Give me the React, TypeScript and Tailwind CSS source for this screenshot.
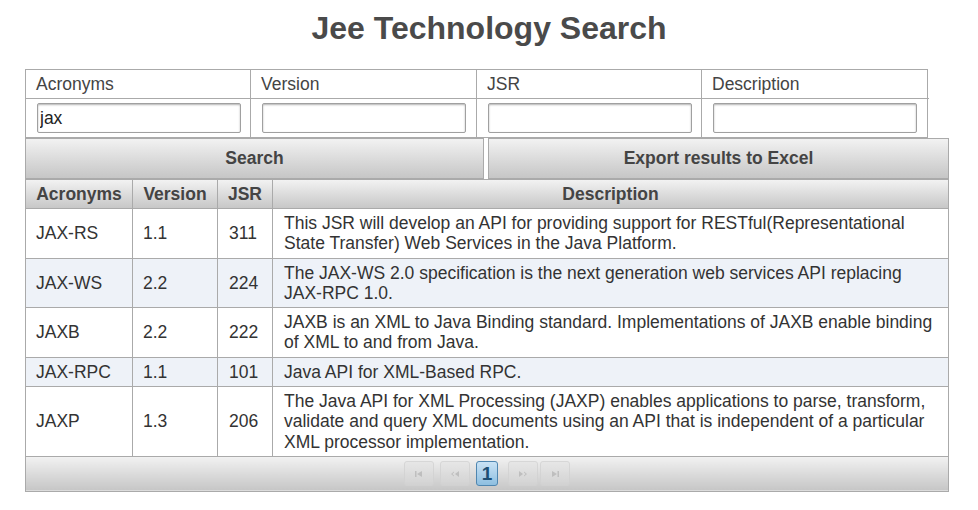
import React from "react";

const rows = [
  {
    acr: "JAX-RS",
    ver: "1.1",
    jsr: "311",
    desc: "This JSR will develop an API for providing support for RESTful(Representational State Transfer) Web Services in the Java Platform.",
  },
  {
    acr: "JAX-WS",
    ver: "2.2",
    jsr: "224",
    desc: "The JAX-WS 2.0 specification is the next generation web services API replacing JAX-RPC 1.0.",
  },
  {
    acr: "JAXB",
    ver: "2.2",
    jsr: "222",
    desc: "JAXB is an XML to Java Binding standard. Implementations of JAXB enable binding of XML to and from Java.",
  },
  { acr: "JAX-RPC", ver: "1.1", jsr: "101", desc: "Java API for XML-Based RPC." },
  {
    acr: "JAXP",
    ver: "1.3",
    jsr: "206",
    desc: "The Java API for XML Processing (JAXP) enables applications to parse, transform, validate and query XML documents using an API that is independent of a particular XML processor implementation.",
  },
];

const grad = "bg-gradient-to-b from-[#f2f2f2] to-[#c6c6c6]";
const font = '"Liberation Sans", Arial, sans-serif';

function PagerIcon({ kind }: { kind: "first" | "prev" | "next" | "last" }) {
  return (
    <svg width="10" height="8" viewBox="0 0 10 8" className="text-[#b8b8b8]">
      {kind === "first" && (
        <g fill="currentColor">
          <rect x="1" y="1" width="1.5" height="6" />
          <path d="M3 4 L8 1 L8 7 Z" />
        </g>
      )}
      {kind === "prev" && (
        <g fill="currentColor">
          <path d="M4 1.5 L1 4 L4 6.5 L4 5.5 L2.4 4 L4 2.5 Z" />
          <path d="M5 4 L9 1 L9 7 Z" />
        </g>
      )}
      {kind === "next" && (
        <g fill="currentColor">
          <path d="M1 1 L5 4 L1 7 Z" />
          <path d="M6 1.5 L9 4 L6 6.5 L6 5.5 L7.6 4 L6 2.5 Z" />
        </g>
      )}
      {kind === "last" && (
        <g fill="currentColor">
          <path d="M2 1 L7 4 L2 7 Z" />
          <rect x="7.5" y="1" width="1.5" height="6" />
        </g>
      )}
    </svg>
  );
}

function PagerBtn({ kind, className = "" }: { kind: "first" | "prev" | "next" | "last"; className?: string }) {
  return (
    <div
      className={`flex h-[25px] w-[30px] items-center justify-center rounded-[3px] border border-[#d2d2d2] bg-gradient-to-b from-[#e6e6e6] to-[#d4d4d4] opacity-80 ${className}`}
    >
      <PagerIcon kind={kind} />
    </div>
  );
}

export default function App() {
  const labels = ["Acronyms", "Version", "JSR", "Description"];
  return (
    <div
      className="min-h-[510px] w-[978px] bg-white text-[17.5px] text-[#333]"
      style={{ fontFamily: font }}
    >
      <h1 className="pt-[8px] pb-[21px] text-center text-[32px] font-bold leading-[40px] text-[#4a4a4a]">
        Jee Technology Search
      </h1>

      <div className="ml-[25px] w-[903px]">
        <div className="grid grid-cols-[225px_226px_225px_227px] border border-[#aaa]">
          {labels.map((l, i) => (
            <div
              key={l}
              className={`h-[29px] border-b border-[#aaa] pl-[10px] leading-[29px] text-[#444] ${i < 3 ? "border-r" : ""}`}
            >
              {l}
            </div>
          ))}
          {labels.map((l, i) => (
            <div
              key={l + "in"}
              className={`flex h-[38px] items-center pl-[11px] ${i < 3 ? "border-r border-[#aaa]" : ""}`}
            >
              <input
                defaultValue={i === 0 ? "jax" : ""}
                className="h-[30px] w-[204px] rounded-[2px] border border-[#a0a0a0] bg-white px-[2px] text-[17.5px] text-[#222] shadow-[inset_0_1px_2px_rgba(0,0,0,0.3)] outline-none"
                style={{ fontFamily: font }}
              />
            </div>
          ))}
        </div>
      </div>

      <div className="ml-[25px] flex w-[924px] gap-[4px]">
        <button
          className={`h-[41px] w-[459px] border border-[#aaa] ${grad} text-[17.5px] font-bold text-[#444]`}
        >
          Search
        </button>
        <button
          className={`h-[41px] flex-1 border border-[#aaa] ${grad} text-[17.5px] font-bold text-[#444]`}
        >
          Export results to Excel
        </button>
      </div>

      <table className="ml-[25px] w-[924px] border-collapse border border-[#aaa]">
        <thead>
          <tr className={`${grad} h-[29px]`}>
            <th className="w-[107px] border border-[#aaa] px-[2px] text-center font-bold text-[#444]">
              Acronyms
            </th>
            <th className="w-[85px] border border-[#aaa] px-[2px] text-center font-bold text-[#444]">
              Version
            </th>
            <th className="w-[55px] border border-[#aaa] px-[2px] text-center font-bold text-[#444]">
              JSR
            </th>
            <th className="border border-[#aaa] px-[4px] text-center font-bold text-[#444]">
              Description
            </th>
          </tr>
        </thead>
        <tbody>
          {rows.map((r, i) => (
            <tr key={r.acr} className={i % 2 === 1 ? "bg-[#eef2f8]" : "bg-white"}>
              <td className="border border-[#aaa] py-[4px] pl-[10px] leading-[20.3px]">{r.acr}</td>
              <td className="border border-[#aaa] py-[4px] pl-[10px] leading-[20.3px]">{r.ver}</td>
              <td className="border border-[#aaa] py-[4px] pl-[11px] leading-[20.3px]">{r.jsr}</td>
              <td className="border border-[#aaa] py-[4px] pl-[11px] pr-[6px] leading-[20.3px]">
                {r.desc}
              </td>
            </tr>
          ))}
        </tbody>
        <tfoot>
          <tr>
            <td colSpan={4} className={`h-[35px] border border-[#aaa] ${grad}`}>
              <div className="flex items-center pl-[378px]">
                <PagerBtn kind="first" />
                <PagerBtn kind="prev" className="ml-[6px]" />
                <div className="ml-[6px] flex h-[25px] w-[22px] items-center justify-center rounded-[3px] border border-[#4f86b0] bg-gradient-to-b from-[#c9e2f5] to-[#8ebfe0] text-[19px] font-bold text-[#1d4f74]">
                  1
                </div>
                <PagerBtn kind="next" className="ml-[10px]" />
                <PagerBtn kind="last" className="ml-[2px]" />
              </div>
            </td>
          </tr>
        </tfoot>
      </table>
    </div>
  );
}
